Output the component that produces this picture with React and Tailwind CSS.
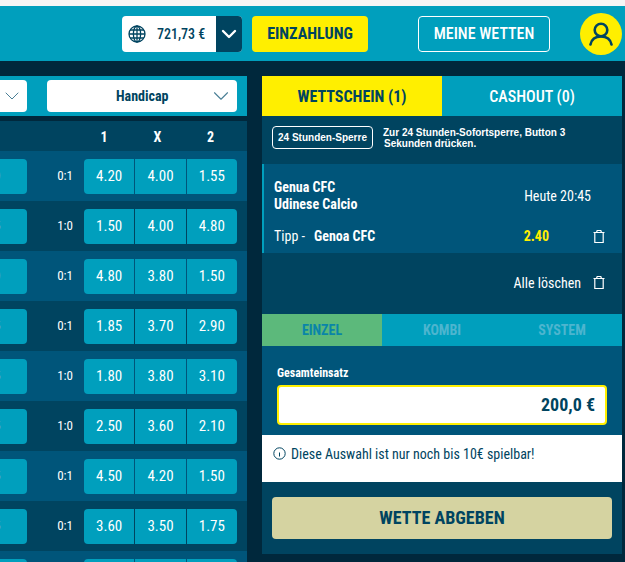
import { ChevronDown } from "lucide-react";

const rows = [
  { cut: "0", hc: "0:1", odds: ["4.20", "4.00", "1.55"] },
  { cut: "5", hc: "1:0", odds: ["1.50", "4.00", "4.80"] },
  { cut: "0", hc: "0:1", odds: ["4.80", "3.80", "1.50"] },
  { cut: "5", hc: "0:1", odds: ["1.85", "3.70", "2.90"] },
  { cut: "5", hc: "1:0", odds: ["1.80", "3.80", "3.10"] },
  { cut: "5", hc: "1:0", odds: ["2.50", "3.60", "2.10"] },
  { cut: "5", hc: "0:1", odds: ["4.50", "4.20", "1.50"] },
  { cut: "5", hc: "0:1", odds: ["3.60", "3.50", "1.75"] },
  { cut: "5", hc: "0:1", odds: ["", "", ""] },
];

const cond = "font-['Roboto_Condensed','Roboto',sans-serif] [font-stretch:75%]";

function Trash() {
  return (
    <svg width="12" height="13" viewBox="0 0 12 13" fill="none" stroke="currentColor" strokeWidth="1.2">
      <path d="M0.5 2.5h11M3.5 2.5l.7-2h3.6l.7 2M1.8 2.5v10h8.4v-10" />
    </svg>
  );
}

function Globe() {
  return (
    <svg width="18" height="18" viewBox="0 0 18 18" fill="none" stroke="#004460" strokeWidth="1.3">
      <circle cx="9" cy="9" r="8" />
      <ellipse cx="9" cy="9" rx="3.6" ry="8" />
      <path d="M9 1v16M1 9h16M2 5h14M2 13h14" />
    </svg>
  );
}

function OddsRow({ row, dark }) {
  return (
    <div className={`flex h-[50px] items-center justify-end ${dark ? "bg-[#004460]" : "bg-[#00557a]"}`}>
      <div className="mr-auto flex h-[35px] w-[27px] items-center justify-start overflow-hidden rounded-r bg-[#009fbd] text-[13px] text-[#d9c6e0]">
        <span className="-ml-[6px]">{row.cut}</span>
      </div>
      <span className="mr-[11px] text-[13px] text-white">{row.hc}</span>
      <div className="mr-[10px] flex h-[35px] w-[153px] gap-px overflow-hidden rounded">
        {row.odds.map((o, i) => (
          <div key={i} className="flex flex-1 items-center justify-center bg-[#009fbd] pt-px text-[15px] text-white">
            {o}
          </div>
        ))}
      </div>
    </div>
  );
}

export default function App() {
  return (
    <div className={`h-[562px] w-[625px] overflow-hidden bg-[#00283c] text-white ${cond}`}>
      <div className="h-[6px] bg-[#f5f5f5]" />
      <header className="flex h-[55px] items-center justify-end bg-[#009fbd] pr-[3px]">
        <div className="flex h-9 w-[120px] overflow-hidden rounded bg-white">
          <div className="flex flex-1 items-center gap-[11px] pl-[6px] text-sm font-medium text-[#004460]">
            <Globe />
            <span>721,73 €</span>
          </div>
          <div className="flex w-[26px] items-center justify-center bg-[#004460]">
            <ChevronDown size={24} strokeWidth={2.4} />
          </div>
        </div>
        <button className="ml-[10px] h-9 w-[116px] rounded bg-[#ffef00] text-base font-bold text-[#004460]">
          EINZAHLUNG
        </button>
        <button className="ml-[50px] h-9 w-[132px] rounded border border-white text-base font-medium">
          MEINE WETTEN
        </button>
        <div className="ml-[30px] flex size-[42px] items-center justify-center rounded-full bg-[#ffef00]">
          <svg width="24" height="24" viewBox="0 0 24 24" fill="none" stroke="#004460" strokeWidth="2.6" strokeLinecap="round">
            <circle cx="12" cy="8" r="6.3" />
            <path d="M1.5 22.5c1-5 5-8 10.5-8s9.5 3 10.5 8" />
          </svg>
        </div>
      </header>

      <main className="mt-[15px] flex gap-[15px]">
        <section className="w-[247px] shrink-0">
          <div className="flex h-10 items-center justify-between bg-[#009fbd] pr-[10px]">
            <div className="flex h-8 w-[27px] items-center justify-end rounded-r bg-white pr-[3px] text-[#4a7f96]">
              <ChevronDown size={26} strokeWidth={1} />
            </div>
            <div className="flex h-8 w-[190px] items-center justify-between rounded bg-white pl-[69px] pr-[3px] text-sm font-bold text-[#004460]">
              <span>Handicap</span>
              <ChevronDown className="text-[#4a7f96]" size={26} strokeWidth={1} />
            </div>
          </div>
          <div className="mt-[5px] flex h-[30px] items-center justify-end bg-[#004460] pr-[10px] pt-px text-sm font-bold">
            <span className="w-[40px] text-center">1</span>
            <span className="w-[67px] text-center">X</span>
            <span className="w-[46px] pr-[7px] text-center">2</span>
          </div>
          {rows.map((row, i) => (
            <OddsRow key={i} row={row} dark={i % 2 === 1} />
          ))}
        </section>

        <aside className="w-[360px] shrink-0">
          <div className="flex h-10 text-base">
            <div className="flex w-[180px] items-center justify-center bg-[#ffef00] pt-px font-bold text-[#004460]">WETTSCHEIN (1)</div>
            <div className="flex flex-1 items-center justify-center bg-[#009fbd] pt-px font-medium">CASHOUT (0)</div>
          </div>
          <div className="flex h-12 items-start bg-[#004460] pl-[10px] pt-[10px] font-['Liberation_Sans',sans-serif] text-[10px] font-bold [font-stretch:100%]">
            <div className="flex h-[23px] w-[101px] items-center justify-center whitespace-nowrap rounded-sm border border-white">24 Stunden-Sperre</div>
            <p className="ml-[10px] mt-px leading-[11px]">
              Zur 24 Stunden-Sofortsperre, Button 3
              <br />
              <span className="pl-px">Sekunden drücken.</span>
            </p>
          </div>
          <div className="h-[89px] border-l-2 border-[#009fbd] bg-[#00557a] pl-[10px] pr-[17px] pt-[15px] text-sm">
            <div className="flex items-center justify-between">
              <div className="font-bold leading-[17px]">
                <div>Genua CFC</div>
                <div>Udinese Calcio</div>
              </div>
              <span className="mr-[14px]">Heute 20:45</span>
            </div>
            <div className="mt-[13px] flex items-center">
              <span>Tipp -</span>
              <span className="ml-[9px] font-bold">Genoa CFC</span>
              <span className="ml-auto font-bold text-[#ffef00]">2.40</span>
              <span className="ml-[44px]"><Trash /></span>
            </div>
          </div>
          <div className="flex h-[61px] items-start justify-end bg-[#004460] pr-[17px] pt-[20px] text-sm">
            <span className="mr-3">Alle löschen</span>
            <span className="mt-[3px]"><Trash /></span>
          </div>
          <div className="flex h-8 text-sm font-bold">
            <div className="flex w-[120px] items-center justify-center bg-[#5cb97b] text-[#0a85a8]">EINZEL</div>
            <div className="flex w-[120px] items-center justify-center bg-[#009fbd] text-[#4db5cf]">KOMBI</div>
            <div className="flex w-[120px] items-center justify-center bg-[#009fbd] text-[#4db5cf]">SYSTEM</div>
          </div>
          <div className="h-[89px] bg-[#00557a] px-[15px] pt-[20px]">
            <div className="text-xs font-bold leading-[14px]">Gesamteinsatz</div>
            <div className="mt-[5px] flex h-10 items-center justify-end rounded-sm border-2 border-[#ffef00] bg-white pr-[10px] text-lg font-bold text-[#004460]">
              200,0 €
            </div>
          </div>
          <div className="flex h-[47px] items-start gap-[5px] bg-white pl-[11px] pt-[9px] text-sm text-[#004460]">
            <svg className="mt-[3px]" width="13" height="13" viewBox="0 0 13 13" fill="none" stroke="#004460">
              <circle cx="6.5" cy="6.5" r="5.7" />
              <path d="M6.5 5.5v4" />
            </svg>
            <span>Diese Auswahl ist nur noch bis 10€ spielbar!</span>
          </div>
          <div className="h-[72px] bg-[#004460] px-[10px] pt-[15px]">
            <button className="h-[42px] w-full rounded bg-[#d5d3a1] text-lg font-bold text-[#004460]">
              WETTE ABGEBEN
            </button>
          </div>
        </aside>
      </main>
    </div>
  );
}
